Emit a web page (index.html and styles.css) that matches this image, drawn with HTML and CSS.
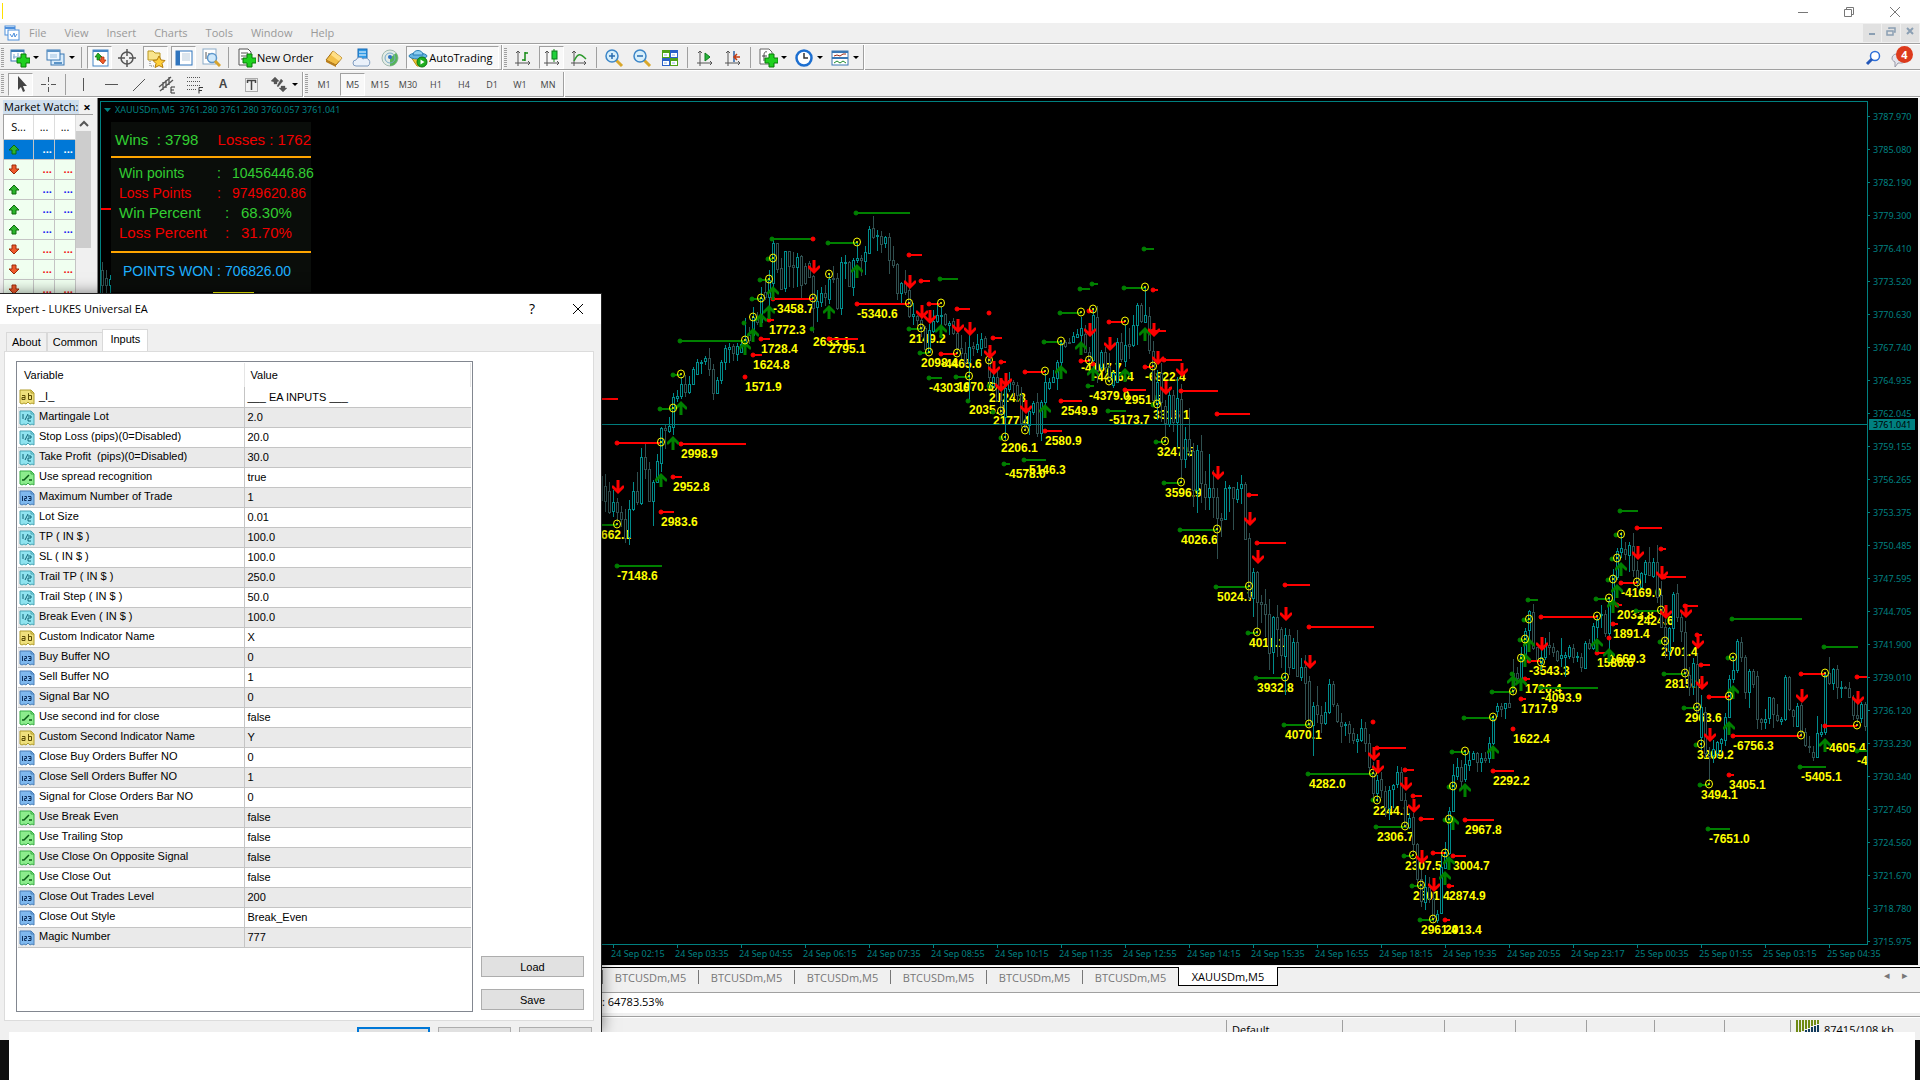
FILE: index.html
```html
<!DOCTYPE html>
<html lang="en">
<head>
    <meta charset="utf-8">
    <meta name="viewport" content="width=device-width, initial-scale=1">
    <title>XAUUSDm,M5</title>
    <link rel="stylesheet" href="styles.css">
</head>
<body>
    <svg class="sprite" aria-hidden="true">
        <symbol id="i-plus" viewBox="0 0 20 20"><path d="M11 6h5v4h4v5h-4v4h-5v-4H7v-5h4z" fill="#1fd01f" stroke="#087a08"/></symbol>
        <symbol id="i-app" viewBox="0 0 16 16"><rect x="1" y="1" width="10" height="9" fill="#fff" stroke="#4d8fdc"/><path d="M1 3h10" stroke="#4d8fdc" stroke-width="2"/><rect x="4" y="5" width="11" height="10" fill="#fff" stroke="#4d8fdc"/><path d="M6 9l2 3 2-4 1 4 2-3" fill="none" stroke="#4d8fdc"/></symbol>
        <symbol id="i-newchart" viewBox="0 0 20 20"><rect x="1" y="2" width="13" height="11" fill="#fff" stroke="#3a78b4"/><path d="M1 3h13" stroke="#3a78b4" stroke-width="2"/><path d="M4 6v5M3 9h8M8 5v3" stroke="#7aa7cf"/><use href="#i-plus" width="20" height="20"/></symbol>
        <symbol id="i-profiles" viewBox="0 0 20 20"><rect x="5" y="6" width="13" height="11" fill="#d9ecfb" stroke="#3a78b4"/><rect x="1" y="2" width="13" height="10" fill="#eef7ff" stroke="#3a78b4"/><path d="M1 3h13M8 15h8" stroke="#5b93c6" stroke-width="2"/><path d="M4 7h7M4 9h7" stroke="#9dc1df"/></symbol>
        <symbol id="i-market" viewBox="0 0 20 20"><rect x="3" y="2" width="15" height="16" fill="#fff" stroke="#4486c6"/><path d="M3 3h15" stroke="#4486c6" stroke-width="2"/><path d="M8 5l4 4h-2v3H7V9H5z" fill="#22b222" stroke="#0b6b0b" stroke-width=".7"/><path d="M13 16l-4-4h2V9h3v3h2z" fill="#f05a28" stroke="#a32b08" stroke-width=".7"/></symbol>
        <symbol id="i-data" viewBox="0 0 20 20"><circle cx="10" cy="10" r="6" fill="none" stroke="#555" stroke-width="1.5"/><path d="M10 1v7M10 12v7M1 10h7M12 10h7" stroke="#555" stroke-width="1.5"/></symbol>
        <symbol id="i-navigator" viewBox="0 0 20 20"><path d="M2 3h5l2 2h5v7H2z" fill="#f9e48c" stroke="#b99620"/><path d="M4 13v5h5" fill="none" stroke="#777" stroke-dasharray="1 1"/><path d="M13 8l2 4 4 .5-3 3 1 4-4-2-4 2 1-4-3-3 4-.5z" fill="#ffcf3a" stroke="#b57d0a"/></symbol>
        <symbol id="i-terminal" viewBox="0 0 20 20"><rect x="2" y="3" width="16" height="14" fill="#fff" stroke="#2f74bd"/><rect x="2" y="3" width="4" height="14" fill="#2f74bd"/><path d="M8 6h8M8 8h8M8 10h8M8 12h8" stroke="#b9cbdb"/></symbol>
        <symbol id="i-tester" viewBox="0 0 20 20"><rect x="2" y="1" width="13" height="15" fill="#fff" stroke="#8cabc8"/><path d="M5 4v7M8 5v5" stroke="#555"/><circle cx="11" cy="10" r="4.5" fill="#cfe8fa" stroke="#5d97cc" stroke-width="1.5"/><path d="M14 13l5 5" stroke="#d8a32c" stroke-width="3"/></symbol>
        <symbol id="i-order" viewBox="0 0 20 20"><path d="M3 1h9l3 3v13H3z" fill="#fff" stroke="#555"/><path d="M5 5h7M5 8h7M5 11h5" stroke="#555"/><use href="#i-plus" width="20" height="20"/></symbol>
        <symbol id="i-book" viewBox="0 0 20 20"><path d="M2 12L9 3l9 7-6 7z" fill="#f2bf48" stroke="#a36d11"/><path d="M2 12l10 5v2L2 14z" fill="#b97e1c"/><path d="M9 3l9 7-3 3-8-6z" fill="#ffdf86"/></symbol>
        <symbol id="i-cloud" viewBox="0 0 20 20"><rect x="6" y="1" width="9" height="12" fill="#2f9ae6" stroke="#1769b3"/><path d="M7 4h7M7 7h7" stroke="#fff"/><path d="M4 18a3 3 0 0 1 0-6 4 4 0 0 1 7-1 3.5 3.5 0 0 1 5 7z" fill="#eaf1fa" stroke="#7f9cc0"/></symbol>
        <symbol id="i-signal" viewBox="0 0 20 20"><circle cx="10" cy="10" r="8" fill="#e3ece6" stroke="#9fb9ae"/><path d="M10 18a8 8 0 0 0 6-13l-6 5z" fill="#56b45a"/><circle cx="10" cy="10" r="5" fill="none" stroke="#79a9c9"/><circle cx="10" cy="9" r="2" fill="#2d73c4"/></symbol>
        <symbol id="i-auto" viewBox="0 0 20 20"><path d="M3 9h14l-5 9H9z" fill="#f3c534" stroke="#b58b13"/><ellipse cx="10" cy="8" rx="9" ry="3" fill="#65b5e3" stroke="#2b7fb4"/><path d="M5 7c0-6 10-6 10 0z" fill="#8fd0f2" stroke="#2b7fb4"/><circle cx="14" cy="14" r="5" fill="#1fae1f" stroke="#0e770e"/><path d="M12.5 11.5v5l4-2.5z" fill="#fff"/></symbol>
        <symbol id="i-axes" viewBox="0 0 20 20"><path d="M5 3v15M2 15h15M3 5l2-2 2 2M15 13l2 2-2 2" fill="none" stroke="#555"/></symbol>
        <symbol id="i-bars" viewBox="0 0 20 20"><use href="#i-axes" width="20" height="20"/><path d="M12 4v9M12 5h3M9 12h3" stroke="#158a15" stroke-width="1.5"/></symbol>
        <symbol id="i-candles" viewBox="0 0 20 20"><use href="#i-axes" width="20" height="20"/><path d="M12 1v13" stroke="#158a15"/><rect x="10" y="3" width="5" height="8" fill="#1fd03a" stroke="#0b7a1a"/></symbol>
        <symbol id="i-line" viewBox="0 0 20 20"><use href="#i-axes" width="20" height="20"/><path d="M5 13c4-8 6-8 12-2" fill="none" stroke="#2c9a2c" stroke-width="1.5"/></symbol>
        <symbol id="i-zoomin" viewBox="0 0 20 20"><path d="M12 12l6 6" stroke="#d9a72b" stroke-width="3"/><circle cx="8" cy="8" r="6" fill="#d7effb" stroke="#3c86c8" stroke-width="1.5"/><path d="M8 5v6M5 8h6" stroke="#2a6db0" stroke-width="1.5"/></symbol>
        <symbol id="i-zoomout" viewBox="0 0 20 20"><path d="M12 12l6 6" stroke="#d9a72b" stroke-width="3"/><circle cx="8" cy="8" r="6" fill="#d7effb" stroke="#3c86c8" stroke-width="1.5"/><path d="M5 8h6" stroke="#2a6db0" stroke-width="1.5"/></symbol>
        <symbol id="i-tile" viewBox="0 0 20 20"><path d="M2 2h8v8H2zM10 10h8v8h-8z" fill="#4ea318"/><path d="M10 2h8v8h-8zM2 10h8v8H2z" fill="#2a62c8"/><path d="M3 5h6v4H3zM11 5h6v4h-6zM3 13h6v4H3zM11 13h6v4h-6z" fill="#fff"/><path d="M4 7h3M12 7h3M4 15h3M12 15h3" stroke="#8cb6e0"/></symbol>
        <symbol id="i-scroll" viewBox="0 0 20 20"><use href="#i-axes" width="20" height="20"/><path d="M10 5v8l5-4z" fill="#27b53c" stroke="#0b7a1a"/></symbol>
        <symbol id="i-shift" viewBox="0 0 20 20"><use href="#i-axes" width="20" height="20"/><path d="M11 3v11" stroke="#2a62a8" stroke-width="1.5"/><path d="M17 9h-5M14 6l-3 3 3 3" fill="none" stroke="#c23b12" stroke-width="1.5"/></symbol>
        <symbol id="i-indicator" viewBox="0 0 20 20"><path d="M2 1h9l3 3v12H2z" fill="#fff" stroke="#666"/><path d="M9 4c-2-1-3 1-3 3v6M4 8h5" fill="none" stroke="#444"/><use href="#i-plus" width="20" height="20"/></symbol>
        <symbol id="i-clock" viewBox="0 0 20 20"><circle cx="10" cy="10" r="7.5" fill="#fff" stroke="#1d6fd0" stroke-width="2.5"/><path d="M10 5v5h4" fill="none" stroke="#333" stroke-width="1.5"/></symbol>
        <symbol id="i-template" viewBox="0 0 20 20"><rect x="2" y="3" width="16" height="14" fill="#fff" stroke="#3a78b4"/><path d="M2 4h16M2 10h16" stroke="#3a78b4" stroke-width="2"/><path d="M4 8l3-1 3 1 3-2h3" fill="none" stroke="#9c2c14"/><path d="M4 15l3-2 3 2 3-2 3 2" fill="none" stroke="#1c8a2c"/></symbol>
        <symbol id="i-cursor" viewBox="0 0 20 20"><path d="M7 2v14l3-3 2 5 2-1-2-5h4z" fill="#444"/></symbol>
        <symbol id="i-cross" viewBox="0 0 20 20"><path d="M10.5 3v5M10.5 13v5M3 10.5h5M13 10.5h5M10 10.5h1" stroke="#555"/></symbol>
        <symbol id="i-vline" viewBox="0 0 20 20"><path d="M10.5 4v13" stroke="#555"/></symbol>
        <symbol id="i-hline" viewBox="0 0 20 20"><path d="M4 10.5h13" stroke="#555"/></symbol>
        <symbol id="i-trend" viewBox="0 0 20 20"><path d="M4 17L16 5" stroke="#555"/></symbol>
        <symbol id="i-channel" viewBox="0 0 20 20"><path d="M2 13L14 3M3 17L16 6M6 8v8M9 6v8M12 3v8" stroke="#555" stroke-width="1.3"/><path d="M18 13h-4v6h4M14 16h3" fill="none" stroke="#333"/></symbol>
        <symbol id="i-fibo" viewBox="0 0 20 20"><path d="M2 3.5h14M2 7.5h14M2 11.5h14M2 15.5h9" stroke="#555" stroke-dasharray="1 1"/><path d="M18 13.5h-4v6M14 16.5h3" fill="none" stroke="#333"/></symbol>
        <symbol id="i-label" viewBox="0 0 20 20"><rect x="4.5" y="4.5" width="12" height="13" fill="none" stroke="#666" stroke-dasharray="1 1"/><path d="M6 6.5h9M10.5 6v10M6.5 6v3M14.5 6v3" stroke="#444" stroke-width="1.5"/></symbol>
        <symbol id="i-shapes" viewBox="0 0 20 20"><path d="M6 3l4 4-2 1v2H5V8L2 7zM14 18l-4-4h2v-2h4v2h2zM12 5l2 2-5 6-1-1z" fill="#555" stroke="#555" stroke-width=".3"/></symbol>
        <symbol id="i-search" viewBox="0 0 16 16"><circle cx="10" cy="6" r="4.5" fill="#fff" stroke="#2e6fd8" stroke-width="1.5"/><path d="M7 9l-5 5" stroke="#2457b8" stroke-width="3"/></symbol>
        <symbol id="i-up" viewBox="0 0 12 12"><path d="M6 1l5 5H8v4H4V6H1z" fill="#2cb52c" stroke="#0d6b0d"/></symbol>
        <symbol id="i-down" viewBox="0 0 12 12"><path d="M6 10L1 5h3V1h4v4h3z" fill="#ee5a2a" stroke="#9c2c0a"/></symbol>
        <symbol id="i-page" viewBox="0 0 16 16"><path d="M1 1h11l3 3v11l-2-1-2 1-2-2-2 2-2-1-2 1-2-1z"/><path d="M12 1v3h3" fill="none"/></symbol>
        <symbol id="i-double" viewBox="0 0 16 16"><use href="#i-page" fill="#8fe3ef" stroke="#4aa5b5" width="16" height="16"/><path d="M4 4v5M6 10l3-6M9 6h3v2H9v3h3" fill="none" stroke="#0f6273"/></symbol>
        <symbol id="i-bool" viewBox="0 0 16 16"><use href="#i-page" fill="#8cec8c" stroke="#37ab45" width="16" height="16"/><path d="M3 10h2l5-5M10 10h3" fill="none" stroke="#0b5c17" stroke-width="1.5"/></symbol>
        <symbol id="i-int" viewBox="0 0 16 16"><use href="#i-page" fill="#7fb8ee" stroke="#4a7fb8" width="16" height="16"/><path d="M3.5 6v5M5.5 6.5h2v2h-2v2h2M9 6.5h3v4H9M10 8.5h2" fill="none" stroke="#0d2f5c"/></symbol>
        <symbol id="i-string" viewBox="0 0 16 16"><use href="#i-page" fill="#efe07c" stroke="#b09c2c" width="16" height="16"/><path d="M3 6.5h3v4H3v-2h3M9.5 4v6.5h3v-4h-3" fill="none" stroke="#5c4d06"/></symbol>
    </svg>

    <div class="app">
        <header class="titlebar">
            <span class="title-mark"></span>
            <div class="window-controls">
                <button aria-label="Minimize"><svg viewBox="0 0 12 12"><path d="M1 6.5h10"/></svg></button>
                <button aria-label="Restore"><svg viewBox="0 0 12 12"><path d="M1.5 3.5h7v7h-7zM3.5 3.5v-2h7v7h-2"/></svg></button>
                <button aria-label="Close"><svg viewBox="0 0 12 12"><path d="M1 1l10 10M11 1L1 11"/></svg></button>
            </div>
        </header>

        <nav class="menubar">
            <svg class="icon-sm"><use href="#i-app"/></svg>
            <button>File</button><button>View</button><button>Insert</button><button>Charts</button><button>Tools</button><button>Window</button><button>Help</button>
            <div class="mdi-controls">
                <button aria-label="Minimize chart"><svg viewBox="0 0 12 12"><path d="M3 9h6"/></svg></button>
                <button aria-label="Restore chart"><svg viewBox="0 0 12 12"><path d="M2 6h6v4H2zM4 4V3h6v4H9" stroke-width="1.5"/></svg></button>
                <button aria-label="Close chart"><svg viewBox="0 0 12 12"><path d="M3 3l6 6M9 3L3 9"/></svg></button>
            </div>
        </nav>

        <div class="toolbar">
            <i class="grip"></i>
            <button class="drop" aria-label="New chart"><svg><use href="#i-newchart"/></svg></button>
            <button class="drop" aria-label="Profiles"><svg><use href="#i-profiles"/></svg></button>
            <i class="sep"></i>
            <button class="on" aria-label="Market Watch"><svg><use href="#i-market"/></svg></button>
            <button aria-label="Data Window"><svg><use href="#i-data"/></svg></button>
            <button class="on" aria-label="Navigator"><svg><use href="#i-navigator"/></svg></button>
            <button class="on" aria-label="Terminal"><svg><use href="#i-terminal"/></svg></button>
            <button aria-label="Strategy Tester"><svg><use href="#i-tester"/></svg></button>
            <i class="sep"></i>
            <button class="wide"><svg><use href="#i-order"/></svg>New Order</button>
            <button aria-label="MetaEditor"><svg><use href="#i-book"/></svg></button>
            <button aria-label="Storage"><svg><use href="#i-cloud"/></svg></button>
            <button aria-label="Signals"><svg><use href="#i-signal"/></svg></button>
            <button class="wide on"><svg><use href="#i-auto"/></svg>AutoTrading</button>
            <i class="edge"></i>
            <i class="grip"></i>
            <button aria-label="Bar Chart"><svg><use href="#i-bars"/></svg></button>
            <button class="on" aria-label="Candlesticks"><svg><use href="#i-candles"/></svg></button>
            <button aria-label="Line Chart"><svg><use href="#i-line"/></svg></button>
            <i class="sep"></i>
            <button aria-label="Zoom In"><svg><use href="#i-zoomin"/></svg></button>
            <button aria-label="Zoom Out"><svg><use href="#i-zoomout"/></svg></button>
            <button aria-label="Tile Windows"><svg><use href="#i-tile"/></svg></button>
            <i class="sep"></i>
            <button aria-label="Auto Scroll"><svg><use href="#i-scroll"/></svg></button>
            <button aria-label="Chart Shift"><svg><use href="#i-shift"/></svg></button>
            <i class="sep"></i>
            <button class="drop" aria-label="Indicators"><svg><use href="#i-indicator"/></svg></button>
            <button class="drop" aria-label="Periods"><svg><use href="#i-clock"/></svg></button>
            <button class="drop" aria-label="Templates"><svg><use href="#i-template"/></svg></button>
            <i class="edge"></i>
            <div class="toolbar-right">
                <button aria-label="Search"><svg class="icon-sm"><use href="#i-search"/></svg></button>
                <button class="chat" aria-label="Messages"><svg viewBox="0 0 20 20"><path d="M1 10c0-6 14-6 14 0s-5 5-8 5l-3 4v-5c-2-1-3-2-3-4z" fill="#e4e4ec" stroke="#9a9aa8"/></svg><span class="badge">4</span></button>
            </div>
        </div>

        <div class="toolbar toolbar-lines">
            <i class="grip"></i>
            <button class="on" aria-label="Cursor"><svg><use href="#i-cursor"/></svg></button>
            <button aria-label="Crosshair"><svg><use href="#i-cross"/></svg></button>
            <i class="sep"></i>
            <button aria-label="Vertical Line"><svg><use href="#i-vline"/></svg></button>
            <button aria-label="Horizontal Line"><svg><use href="#i-hline"/></svg></button>
            <button aria-label="Trendline"><svg><use href="#i-trend"/></svg></button>
            <button aria-label="Equidistant Channel"><svg><use href="#i-channel"/></svg></button>
            <button aria-label="Fibonacci Retracement"><svg><use href="#i-fibo"/></svg></button>
            <button class="letter">A</button>
            <button aria-label="Text Label"><svg><use href="#i-label"/></svg></button>
            <button class="drop" aria-label="Arrows"><svg><use href="#i-shapes"/></svg></button>
            <i class="edge"></i>
            <i class="grip"></i>
            <button>M1</button><button class="on">M5</button><button>M15</button><button>M30</button><button>H1</button><button>H4</button><button>D1</button><button>W1</button><button>MN</button>
            <i class="edge"></i>
        </div>

        <main class="workspace">
            <aside class="market">
                <div class="market-title"><span>Market Watch:</span><button aria-label="Close Market Watch">×</button></div>
                <div class="market-body">
                    <table>
                        <thead><tr><th>S...</th><th>...</th><th>...</th></tr></thead>
                        <tbody>
                            <tr class="up selected"><td><svg><use href="#i-up"/></svg></td><td>...</td><td>...</td></tr>
                            <tr class="down"><td><svg><use href="#i-down"/></svg></td><td>...</td><td>...</td></tr>
                            <tr class="up"><td><svg><use href="#i-up"/></svg></td><td>...</td><td>...</td></tr>
                            <tr class="up"><td><svg><use href="#i-up"/></svg></td><td>...</td><td>...</td></tr>
                            <tr class="up"><td><svg><use href="#i-up"/></svg></td><td>...</td><td>...</td></tr>
                            <tr class="down"><td><svg><use href="#i-down"/></svg></td><td>...</td><td>...</td></tr>
                            <tr class="down"><td><svg><use href="#i-down"/></svg></td><td>...</td><td>...</td></tr>
                            <tr class="down"><td><svg><use href="#i-down"/></svg></td><td>...</td><td>...</td></tr>
                        </tbody>
                    </table>
                    <div class="scrollbar"><svg viewBox="0 0 10 10"><path d="M1 7l4-4 4 4" fill="none" stroke="#555" stroke-width="2"/></svg><i></i></div>
                </div>
            </aside>

            <section class="chart">
                <svg id="plot"></svg>
                <div class="stats">
                    <div class="stats-head"><span class="win">Wins &nbsp;: 3798</span><span class="loss">Losses : 1762</span></div>
                    <dl class="stats-body">
                        <div class="win"><dt>Win points</dt><dd>:</dd><dd>10456446.86</dd></div>
                        <div class="loss"><dt>Loss Points</dt><dd>:</dd><dd>9749620.86</dd></div>
                        <div class="win big"><dt>Win Percent</dt><dd>:</dd><dd>68.30%</dd></div>
                        <div class="loss big"><dt>Loss Percent</dt><dd>:</dd><dd>31.70%</dd></div>
                    </dl>
                    <div class="stats-foot">POINTS WON : 706826.00</div>
                </div>
            </section>
        </main>

        <nav class="chart-tabs">
            <button>BTCUSDm,M5</button><button>BTCUSDm,M5</button><button>BTCUSDm,M5</button><button>BTCUSDm,M5</button><button>BTCUSDm,M5</button><button>BTCUSDm,M5</button><button class="active">XAUUSDm,M5</button>
            <div class="tab-arrows"><button aria-label="Previous tab">◂</button><button aria-label="Next tab">▸</button></div>
        </nav>
        <div class="terminal"><span>: 64783.53%</span></div>
        <footer class="statusbar">
            <span></span><span>Default</span><span></span><span></span><span></span><span></span><span></span><span></span>
            <span class="traffic"><svg viewBox="0 0 24 14"><path d="M1 0v14M4 0v12M7 0v11M10 0v9M13 0v8M16 0v6M19 0v5M22 0v4" stroke="#6f8a14" stroke-width="2"/><path d="M7 12v2M10 10v4M13 9v5M16 7v7M19 6v8M22 5v9" stroke="#123a5c" stroke-width="2"/></svg>87415/108 kb</span>
        </footer>

        <section class="dialog" role="dialog" aria-labelledby="dialog-title">
            <header>
                <h1 id="dialog-title">Expert - LUKES Universal EA</h1>
                <button class="help" aria-label="Help for dialog">?</button>
                <button aria-label="Close dialog"><svg viewBox="0 0 12 12"><path d="M1 1l10 10M11 1L1 11"/></svg></button>
            </header>
            <div class="dialog-tabs"><button>About</button><button>Common</button><button class="active">Inputs</button></div>
            <div class="panel">
                <div class="listbox">
                    <table>
                        <thead><tr><th>Variable</th><th>Value</th></tr></thead>
                        <tbody id="params"></tbody>
                    </table>
                </div>
                <div class="side"><button>Load</button><button>Save</button></div>
            </div>
            <div class="actions"><button class="default" aria-label="OK"></button><button aria-label="Cancel"></button><button aria-label="Reset"></button></div>
        </section>
    </div>
    <div class="desk"><i></i><i></i></div>

    <script src="chart.js"></script>
</body>
</html>
```

FILE: styles.css
```css
* {
    box-sizing: border-box;
}
html, body {
    margin: 0;
    padding: 0;
}
body {
    display: flex;
    flex-direction: column;
    height: 100vh;
    background: #fff;
    font-family: "Open Sans", "Noto Sans", sans-serif;
    font-size: 11px;
    color: #000;
    overflow: hidden;
}
button {
    margin: 0;
    padding: 0;
    border: none;
    background: none;
    font: inherit;
    color: inherit;
}
.sprite {
    position: absolute;
    width: 0;
    height: 0;
}
.app {
    position: relative;
    display: flex;
    flex-direction: column;
    flex: 1;
    min-height: 0;
    overflow: hidden;
    background: #f0f0f0;
}
.icon-sm {
    width: 16px;
    height: 16px;
}

/* title and menu */
.titlebar {
    display: flex;
    justify-content: space-between;
    height: 23px;
    background: #fff;
}
.title-mark {
    width: 1px;
    height: 16px;
    margin: 3px 0 0 2px;
    background: #ffe000;
}
.window-controls {
    display: flex;
    padding-right: 2px;
}
.window-controls button {
    width: 46px;
    height: 20px;
}
.window-controls svg, .dialog header svg {
    width: 12px;
    height: 12px;
    fill: none;
    stroke: #777;
    vertical-align: middle;
}
.menubar {
    display: flex;
    align-items: center;
    height: 22px;
    padding: 0 1px 2px 4px;
    border-bottom: 1px solid #fff;
    box-shadow: inset 0 -1px #a0a0a0;
    color: #999;
}
.menubar > button {
    padding: 0 9px;
}
.mdi-controls {
    display: flex;
    gap: 1px;
    margin-left: auto;
}
.mdi-controls button {
    width: 18px;
    height: 18px;
    background: #e1e1e1;
}
.mdi-controls svg {
    width: 12px;
    height: 12px;
    fill: none;
    stroke: #8b9fb3;
    stroke-width: 2px;
}

/* toolbars */
.toolbar {
    display: flex;
    align-items: center;
    height: 26px;
    border-bottom: 1px solid #fff;
    box-shadow: inset 0 -1px #a0a0a0;
}
.toolbar button {
    display: flex;
    align-items: center;
    justify-content: center;
    width: 28px;
    height: 23px;
}
.toolbar button svg {
    width: 20px;
    height: 20px;
    flex: none;
}
.toolbar button svg.icon-sm {
    width: 16px;
    height: 16px;
}
.toolbar .on {
    border: 1px solid #fff;
    border-top-color: #a0a0a0;
    border-left-color: #a0a0a0;
    background: #f8f8f8;
    width: 25px;
    margin: 0 1px 0 2px;
}
.toolbar .wide {
    width: auto;
    padding: 0 7px 0 4px;
    gap: 1px;
}
.toolbar .wide.on {
    width: auto;
    padding: 0 6px 0 1px;
}
.toolbar .drop {
    width: 36px;
    gap: 3px;
}
.drop::after {
    content: "";
    border: 3px solid transparent;
    border-top-color: #000;
    border-bottom: 0;
}
.grip {
    width: 3px;
    height: 20px;
    margin: 0 2px 0 1px;
    background: repeating-linear-gradient(#a0a0a0 0 1px, #f0f0f0 1px 2px);
}
.sep {
    width: 1px;
    height: 21px;
    margin: 0 3px;
    background: #a0a0a0;
}
.edge {
    width: 2px;
    height: 25px;
    margin-left: 1px;
    border-left: 1px solid #a0a0a0;
    background: #fff;
}
.toolbar-right {
    display: flex;
    margin-left: auto;
    padding-right: 5px;
}
.chat {
    position: relative;
}
.badge {
    position: absolute;
    top: 0;
    right: 2px;
    width: 17px;
    height: 17px;
    border-radius: 50%;
    background: #dd3a1c;
    color: #fff;
    font: bold 11px/17px "Open Sans", sans-serif;
    text-align: center;
}
.toolbar-lines {
    height: 27px;
    font-size: 9px;
    color: #444;
}
.toolbar .letter {
    font: bold 12px "Liberation Sans", sans-serif;
}

/* market watch */
.workspace {
    display: flex;
    flex: 1;
    min-height: 0;
}
.market {
    width: 97px;
    padding: 2px 4px 0 3px;
}
.market-title {
    display: flex;
    justify-content: space-between;
    height: 14px;
    line-height: 13px;
}
.market-title span {
    background: #cfdfee;
    padding: 0 1px;
}
.market-title button {
    width: 12px;
    font-weight: bold;
    font-size: 13px;
    line-height: 12px;
}
.market-body {
    display: flex;
    border-top: 1px solid #a0a0a0;
}
.market table {
    width: 73px;
    table-layout: fixed;
    border-collapse: collapse;
    background: #f0fff0;
    border-left: 1px solid #a0a0a0;
}
.market th {
    height: 24px;
    padding: 0;
    background: #fff;
    border-right: 1px solid #ddd;
    font-weight: normal;
}
.market th:first-child, .market td:first-child {
    width: 30px;
}
.market td {
    height: 20px;
    padding: 0 2px;
    border: 1px solid #c4c4c4;
    text-align: right;
    line-height: 12px;
    font-weight: bold;
}
.market td:first-child {
    text-align: left;
    padding-left: 4px;
}
.market svg {
    width: 12px;
    height: 12px;
    vertical-align: middle;
}
.market .up td {
    color: #1818f0;
}
.market .down td {
    color: #f01010;
}
.market .selected td {
    background: #0078d7;
    color: #fff;
}
.scrollbar {
    width: 15px;
    text-align: center;
}
.scrollbar svg {
    width: 10px;
    height: 10px;
    margin: 2px 0;
}
.scrollbar i {
    display: block;
    height: 117px;
    background: #cdcdcd;
}

/* chart */
.chart {
    position: relative;
    flex: 1;
    min-width: 0;
    margin-right: 2px;
    border-left: 1px solid #808080;
    background: #000;
    overflow: hidden;
}
#plot {
    display: block;
    width: 100%;
    height: 100%;
    font-family: "Noto Sans", sans-serif;
    font-size: 9px;
}
.axis {
    fill: none;
    stroke: #008080;
    shape-rendering: crispEdges;
}
.axis-text {
    fill: #008080;
    white-space: pre;
}
.bull, .bear {
    fill: #000;
    shape-rendering: crispEdges;
}
.bull {
    stroke: #008b8b;
}
.bear {
    stroke: #2f4f4f;
}
.profit {
    fill: #ff0;
    font: bold 12px "Liberation Sans", sans-serif;
}
.ring {
    fill: none;
    stroke: #ff0;
}
.sell {
    fill: red;
    stroke: red;
}
.buy {
    fill: #008000;
    stroke: #008000;
}
.level {
    stroke-width: 2px;
}
.arrow {
    stroke: none;
}
.stats {
    position: absolute;
    left: 13px;
    top: 24px;
    width: 200px;
    height: 170px;
    background: #0a0d0a;
    font-family: "Liberation Sans", sans-serif;
    font-size: 14px;
    line-height: 20px;
    white-space: nowrap;
}
.stats .win {
    color: #32cd32;
}
.stats .loss {
    color: #f00000;
}
.stats-head {
    display: flex;
    justify-content: space-between;
    height: 36px;
    padding: 8px 0 0 4px;
    border-bottom: 2px solid orange;
    font-size: 15px;
}
.stats-body {
    height: 95px;
    margin: 0;
    padding: 5px 0 0 8px;
    border-bottom: 2px solid orange;
}
.stats-body div {
    display: grid;
    grid-template-columns: 98px 15px auto;
    justify-content: start;
}
.stats-body .big {
    grid-template-columns: 106px 16px auto;
    font-size: 15px;
}
.stats-body dd {
    margin: 0;
}
.stats-foot {
    padding: 8px 0 0 12px;
    color: #1eb0ff;
}

/* bottom strips */
.chart-tabs {
    display: flex;
    height: 26px;
    margin-top: 1px;
    padding-left: 602px;
    border-top: 1px solid #fff;
    box-shadow: inset 0 1px #000;
    color: #777;
}
.chart-tabs > button {
    width: 96px;
    height: 14px;
    margin-top: 3px;
    line-height: 13px;
    border-left: 1px solid #777;
}
.chart-tabs > .active {
    width: 100px;
    height: 19px;
    margin: 0;
    border: 1px solid #000;
    border-top: none;
    background: #fff;
    color: #000;
}
.tab-arrows {
    margin: 0 6px 0 auto;
}
.tab-arrows button {
    width: 18px;
}
.terminal {
    height: 24px;
    padding: 0 3px 3px 602px;
    border-top: 1px solid #a0a0a0;
    background: #fff;
    border-bottom: 3px solid #f0f0f0;
    line-height: 18px;
}
.statusbar {
    display: grid;
    grid-template-columns: 1226fr 116fr 102fr 71fr 71fr 68fr 70fr 66fr 130fr;
    height: 16px;
    border-top: 1px solid #a0a0a0;
    box-shadow: inset 0 1px #fff;
    line-height: 20px;
    overflow: hidden;
}
.statusbar span {
    margin-top: 3px;
    padding-left: 5px;
    border-left: 1px solid #a0a0a0;
}
.traffic svg {
    width: 24px;
    height: 14px;
    margin-right: 4px;
    vertical-align: top;
}
.desk {
    display: flex;
    justify-content: space-between;
    height: 48px;
}
.desk i {
    width: 9px;
    border-top: 8px solid #f0f0f0;
    background: #0f0f0f;
}
.desk i:last-child {
    width: 5px;
}

/* expert properties dialog */
.dialog {
    position: absolute;
    left: 0;
    top: 293px;
    bottom: 0;
    width: 602px;
    display: flex;
    flex-direction: column;
    overflow: hidden;
    background: #f0f0f0;
    border-top: 1px solid #222;
    border-right: 1px solid #222;
    box-shadow: 0 0 14px rgba(0, 0, 0, .5);
    font-family: "Liberation Sans", sans-serif;
    font-size: 11px;
}
.dialog header {
    display: flex;
    align-items: center;
    height: 30px;
    padding: 0 0 2px 6px;
    background: #fff;
}
.dialog h1 {
    margin: 0 auto 0 0;
    font: normal 11px "Open Sans", sans-serif;
}
.dialog header button {
    width: 46px;
}
.dialog header svg {
    stroke: #000;
}
.dialog header .help {
    font: 14px "Open Sans", sans-serif;
}
.dialog-tabs {
    display: flex;
    align-items: flex-end;
    height: 27px;
    padding-left: 6px;
}
.dialog-tabs button {
    height: 19px;
    padding: 0 5px;
    border: 1px solid #d9d9d9;
    border-bottom: none;
}
.dialog-tabs .active {
    height: 22px;
    padding: 0 7px 4px;
    margin-left: -1px;
    background: #fff;
}
.panel {
    display: flex;
    flex: 1;
    gap: 8px;
    min-height: 0;
    margin: 0 7px 0 4px;
    padding: 9px 9px 8px 11px;
    background: #fff;
    border: 1px solid #dcdcdc;
}
.listbox {
    flex: 1;
    padding: 1px;
    border: 1px solid #828790;
    overflow: hidden;
}
.listbox table {
    width: 100%;
    table-layout: fixed;
    border-collapse: collapse;
}
.listbox th {
    height: 24px;
    padding: 0 6px;
    border-right: 1px solid #e5e5e5;
    font-weight: normal;
    text-align: left;
}
.listbox th:first-child {
    width: 226px;
}
.listbox td {
    height: 20px;
    padding: 0 3px;
    border-bottom: 1px solid #c4c4c4;
    white-space: pre;
    line-height: 16px;
}
.listbox td:first-child {
    padding: 0 1px;
    border-right: 1px solid #c4c4c4;
}
.listbox tr:nth-child(even) td {
    background: #eaeaea;
}
.listbox svg {
    width: 16px;
    height: 16px;
    margin-right: 4px;
    vertical-align: middle;
}
.side {
    display: flex;
    flex-direction: column;
    justify-content: flex-end;
    gap: 12px;
    width: 103px;
    padding-bottom: 2px;
}
.side button, .actions button {
    height: 21px;
    border: 1px solid #adadad;
    background: #e1e1e1;
}
.actions {
    display: flex;
    justify-content: flex-end;
    gap: 8px;
    height: 11px;
    padding: 6px 9px 0 0;
}
.actions button {
    width: 73px;
    flex: none;
}
.actions .default {
    border: 2px solid #0078d7;
}
```

FILE: chart.js
```js
(() => {
    const plot = document.getElementById("plot");
    const out = [];
    // Plot coordinates are window coordinates, shifted by the plot's own corner
    const left = 98, top = 98, right = 1867, bottom = 944, priceY = 424;

    // One entry per bar, 4px apart: direction, high, body top, body bottom, low
    const bars = `d470 476 500 503,d474 486 501 512,d482 491 512 514,u490 502 511 517,d498 502 512 522,d506 512 519 527,d509 519 538 543,u500 509 537 545,u482 491 509 511,d472 491 502 505,
u448 457 503 505,d444 457 469 479,d462 469 501 502,u480 482 501 526,u454 461 482 483,u427 428 463 472,d425 428 430 449,u417 426 431 433,u393 397 427 435,u390 396 398 402,
u377 384 396 399,d375 384 392 397,u376 384 392 394,u367 369 384 385,u359 362 374 375,u360 362 363 374,u356 358 361 365,d348 358 369 376,d364 369 393 400,u377 380 393 394,
u360 362 380 384,u345 348 362 370,u343 347 349 363,d344 346 353 361,u343 346 354 361,u342 344 352 353,u318 339 345 347,d327 335 340 344,u307 317 335 337,d312 317 322 325,
u287 298 322 323,d280 292 297 300,u270 280 297 310,u240 243 283 290,d243 243 269 273,d258 268 289 290,u251 251 288 292,d251 251 266 287,d252 265 267 288,u253 257 267 287,
d255 256 285 298,d263 266 283 285,d261 263 277 278,d275 276 308 333,u290 301 307 322,u287 293 302 307,d285 293 297 306,u273 279 299 304,d266 278 279 283,d273 278 308 310,
u257 262 308 315,u255 262 263 279,d261 262 286 287,u258 260 287 296,u243 258 260 263,d255 258 260 276,u246 252 261 275,u226 229 253 254,d216 228 237 239,u230 235 236 251,
d231 236 244 253,u236 237 243 248,d233 237 260 274,d246 260 265 268,d263 264 293 300,u282 283 293 303,d270 282 292 295,d288 290 316 318,u303 314 316 325,d315 316 320 326,
d317 320 328 337,d326 328 349 352,u324 330 352 353,u310 321 331 333,u303 315 321 323,u307 315 316 332,d313 314 324 326,u321 323 325 335,d318 321 333 335,d330 333 348 353,
d335 348 353 359,d342 353 362 367,u335 347 362 400,d342 346 348 356,u334 344 349 353,u333 339 348 356,d336 338 347 348,d347 349 377 387,u372 377 387 388,d370 377 400 402,
d387 400 413 417,u380 388 417 440,u372 380 389 392,d380 382 384 397,d382 385 395 402,d387 395 423 427,d415 424 427 430,u410 411 425 435,u401 403 412 415,d393 402 433 437,
u400 402 433 441,u373 382 402 405,u378 382 388 390,u370 377 382 383,u360 362 378 390,u342 343 362 368,d340 342 346 348,d338 342 343 343,u332 336 342 343,u329 334 337 338,
u317 328 335 347,d325 334 352 353,d347 352 360 363,u308 315 360 373,d306 317 370 383,u350 352 367 370,d347 352 367 373,d353 367 380 383,u372 373 385 388,u338 342 382 383,
d333 342 359 362,u325 345 361 367,d328 344 346 359,u315 325 345 347,u303 305 325 345,d303 305 321 323,u288 315 322 323,d307 316 350 354,d341 351 400 402,u370 382 404 420,
d363 373 402 422,d400 406 423 442,u387 395 424 427,d390 395 422 432,u377 398 422 447,d384 399 459 483,u427 439 459 468,d408 439 451 457,d443 451 490 507,u445 450 490 513,
d435 451 483 503,d471 484 497 510,u454 488 497 510,d470 488 497 518,d488 497 518 559,d513 518 520 537,u481 488 519 520,u485 487 488 512,d487 487 498 530,u482 489 499 503,
u475 484 488 504,d482 484 539 540,d533 538 597 600,u568 572 598 617,d571 572 602 635,d595 602 604 623,d589 604 614 637,d599 614 653 670,u616 617 652 674,d605 617 629 657,
d627 629 655 668,u628 635 656 695,d629 635 667 675,u638 642 668 669,d630 642 676 677,u658 667 677 681,d655 667 683 720,d676 681 725 727,u702 706 725 756,d686 705 714 723,
d706 715 723 733,u702 712 723 725,u679 684 712 714,d681 684 704 707,d703 705 721 723,d713 722 726 743,u722 724 725 736,d721 724 733 743,d728 733 740 744,u734 739 741 753,
u719 728 740 742,d722 728 743 752,d734 743 767 773,d762 773 793 802,u775 780 793 802,d772 779 790 798,d786 791 807 817,u786 790 808 820,u784 785 789 808,u766 772 784 788,
d767 772 800 801,d793 800 827 828,u813 818 827 829,d813 817 844 853,d843 844 879 883,d870 879 901 907,u875 887 902 910,d877 887 898 903,d892 899 918 923,u910 914 920 923,
u855 867 913 914,u842 852 868 869,u807 811 853 855,u764 775 811 812,u758 767 776 780,d760 767 781 789,u752 764 779 782,u751 760 765 771,u751 753 759 760,d752 753 762 772,
u753 758 762 772,d752 758 760 763,u737 743 758 763,u715 719 743 745,u703 706 711 717,d703 706 709 717,u703 703 708 719,d693 703 707 708,d659 673 690 695,d667 673 678 680,
u647 655 678 683,u628 631 657 658,u610 611 630 647,d604 612 648 650,d647 647 661 663,u647 657 663 670,u638 645 657 660,d632 645 647 655,d643 647 652 657,d650 651 660 662,
u638 655 658 667,u652 655 657 677,u645 647 656 659,d644 648 657 663,u652 656 657 662,d653 657 667 672,u641 643 668 668,d639 643 648 650,u623 626 648 650,u617 620 627 638,
u605 614 615 628,d610 614 633 637,u598 601 633 653,u569 575 600 602,u548 551 577 580,u532 548 552 558,d542 549 554 560,u542 545 555 572,d533 546 570 577,d561 570 583 588,
u572 573 587 588,u560 562 574 583,d547 562 575 576,u558 562 576 578,d545 562 597 603,d581 595 627 627,d619 627 647 658,u627 628 651 660,u592 594 628 642,d584 593 617 622,
d612 617 631 642,d621 632 673 683,d667 675 687 696,u658 663 686 695,d653 664 712 713,u695 707 737 750,d707 712 753 758,d747 754 756 783,u740 749 755 763,u741 742 753 758,
u738 739 743 753,u713 717 740 746,u675 679 717 718,u657 670 679 683,u639 641 670 673,d637 642 657 662,d655 657 692 699,u669 671 692 708,d669 671 684 688,d671 676 719 729,
d718 719 722 730,u709 719 722 729,u697 697 718 724,d697 698 714 728,d704 715 720 722,u717 719 721 725,u675 677 719 721,d676 677 709 711,d709 710 716 727,u703 706 726 727,
d703 705 732 737,d728 732 745 747,d736 746 747 753,d746 752 757 761,u716 733 757 758,u724 732 734 737,u673 675 732 735,d657 673 683 685,u668 669 683 690,d665 669 687 699,
u681 687 688 698,d686 687 687 689,d682 688 697 698,d695 698 715 720,d703 715 718 723,u702 704 718 723,d702 704 726 731`;

    // Trade levels: start x, end x, y
    const buyLevels = `590 617 525,617 662 566,660 673 409,673 681 375,680 745 341,744 744 323,752 761 299,760 769 280,768 773 259,772 813 239,828 857 243,856 910 213,812 812 329,
940 958 279,909 921 329,920 929 353,929 942 378,956 969 377,968 968 401,989 989 386,993 993 412,1001 1001 438,1004 1010 464,1024 1046 460,1044 1061 342,1060 1081 313,1080 1090 289,1092 1098 284,
1088 1094 386,1108 1126 411,1124 1145 288,1144 1154 249,1153 1153 405,1156 1165 442,1164 1181 483,1180 1217 530,1216 1249 587,1248 1257 633,1256 1285 678,1284 1309 725,1308 1373 774,1373 1373 800,
1376 1405 827,1404 1413 856,1412 1421 886,1420 1433 920,1528 1538 600,1524 1529 620,1520 1525 640,1492 1513 692,1464 1493 718,1452 1465 752,1449 1449 787,1445 1445 820,1512 1512 674,1540 1598 688,
1596 1609 599,1608 1608 580,1612 1612 559,1616 1616 535,1620 1638 511,1636 1661 611,1660 1660 642,1664 1685 674,1684 1697 708,1696 1696 745,1700 1709 785,1708 1730 829,1728 1733 658,1732 1802 619,
1824 1858 647,1800 1826 767,1857 1867 751`;
    const sellLevels = `585 618 399,617 660 443,681 746 444,673 682 477,661 674 512,813 813 239,773 813 299,769 774 320,761 770 339,753 762 355,745 745 377,829 858 339,857 909 304,
909 922 255,921 930 281,929 940 304,957 970 309,989 989 313,993 1002 338,1001 1006 362,941 957 354,1025 1045 372,1089 1093 311,1081 1089 361,1093 1093 364,1109 1125 322,1153 1158 290,1153 1166 331,
1164 1182 360,1145 1153 367,1125 1146 390,1061 1082 401,1045 1062 431,1181 1218 391,1217 1250 414,1249 1258 495,1257 1286 543,1285 1310 585,1309 1374 627,1373 1373 722,1377 1406 748,1405 1414 770,
1413 1422 796,1421 1434 819,1445 1450 920,1449 1454 886,1453 1466 856,1433 1445 853,1465 1494 820,1493 1514 771,1513 1513 729,1521 1526 699,1525 1530 679,1529 1540 661,1541 1597 617,
1597 1607 653,1609 1609 638,1613 1618 624,1617 1622 605,1621 1637 583,1637 1662 528,1661 1666 549,1664 1686 577,1685 1698 606,1697 1702 635,1701 1710 665,1709 1729 697,1729 1734 775,1733 1801 736,
1801 1825 674,1825 1857 726,1857 1867 677`;

    const rings = `617 524,661 442,673 408,681 374,745 340,753 317,761 298,769 279,773 258,813 298,829 274,857 242,909 303,921 328,941 303,929 352,957 353,969 376,989 360,993 387,1001 411,1005 437,
1025 430,1045 371,1061 341,1081 312,1093 309,1089 360,1109 381,1125 321,1145 287,1153 366,1157 404,1165 441,1181 482,1217 529,1249 586,1257 632,1285 677,1309 724,1373 773,1377 800,1405 826,1413 855,
1421 885,1433 919,1445 853,1449 819,1453 786,1465 751,1493 717,1513 691,1521 658,1525 639,1529 619,1541 662,1597 616,1609 598,1613 579,1617 558,1621 534,1637 582,1661 610,1665 641,1685 673,1697 707,
1701 744,1709 784,1729 696,1733 657,1801 735,1825 673,1857 725`;
    const upArrows = `661 480,673 443,681 408,745 348,753 335,761 320,769 312,773 293,829 312,857 271,941 331,1045 411,1061 372,1081 348,1093 374,1125 375,1145 334,1445 878,1449 863,1453 823,1465 790,
1493 752,1513 682,1521 684,1525 660,1529 645,1597 645,1609 655,1613 606,1617 591,1621 569,1729 728,1733 692,1825 745`;
    const downArrows = `618 487,814 267,910 282,922 312,930 317,958 326,970 329,990 352,994 368,1001 385,1006 380,1026 407,1090 330,1110 344,1154 330,1158 358,1166 388,1182 370,1218 473,1250 519,1258 557,
1286 614,1310 662,1374 754,1378 767,1406 784,1414 806,1422 857,1434 885,1542 644,1638 553,1662 573,1666 612,1686 611,1698 642,1702 683,1710 735,1802 696,1858 698`;
    const profits = `601 539 662.1,617 580 -7148.6,661 526 2983.6,673 491 2952.8,681 458 2998.9,745 391 1571.9,753 369 1624.8,761 353 1728.4,769 334 1772.3,773 313 -3458.7,813 346 2633.1,829 353 2795.1,
857 318 -5340.6,909 343 2149.2,921 367 2098.4,941 368 -4465.6,929 392 -4303.0,957 391 1970.5,969 414 2035.1,989 402 2124.8,993 425 2177.4,1001 452 2206.1,1005 478 -4578.0,1025 474 -5146.3,
1045 445 2580.9,1061 415 2549.9,1081 372 -4107.7,1093 381 -4456.4,1089 400 -4379.0,1125 404 2951.5,1145 381 -6822.4,1109 424 -5173.7,1153 419 3316.1,1157 456 3247.5,1165 497 3596.9,1181 544 4026.6,
1217 601 5024.7,1249 647 4011.1,1257 692 3932.8,1285 739 4070.1,1309 788 4282.0,1373 815 2244.1,1377 841 2306.7,1405 870 2307.5,1413 900 2501.4,1421 934 2961.4,1445 934 2913.4,1449 900 2874.9,
1453 870 3004.7,1465 834 2967.8,1493 785 2292.2,1513 743 1622.4,1521 713 1717.9,1525 693 1726.4,1529 675 -3543.3,1541 702 -4093.9,1597 667 1580.6,1609 663 1669.3,1613 638 1891.4,1617 619 2033.8,
1637 625 2424.6,1621 597 -4169.0,1661 656 2701.4,1665 688 2815.1,1685 722 2963.6,1697 759 3209.2,1701 799 3494.1,1729 789 3405.1,1709 843 -7651.0,1733 750 -6756.3,1801 781 -5405.1,1825 752 -4605.4,1857 765 -4`;

    const prices = ["3787.970", "3785.080", "3782.190", "3779.300", "3776.410", "3773.520", "3770.630", "3767.740", "3764.935", "3762.045", "3759.155", "3756.265", "3753.375", "3750.485", "3747.595", "3744.705", "3741.900", "3739.010", "3736.120", "3733.230", "3730.340", "3727.450", "3724.560", "3721.670", "3718.780", "3715.975"];
    const times = ["24 Sep 00:55", "24 Sep 02:15", "24 Sep 03:35", "24 Sep 04:55", "24 Sep 06:15", "24 Sep 07:35", "24 Sep 08:55", "24 Sep 10:15", "24 Sep 11:35", "24 Sep 12:55", "24 Sep 14:15", "24 Sep 15:35", "24 Sep 16:55", "24 Sep 18:15", "24 Sep 19:35", "24 Sep 20:55", "24 Sep 23:17", "25 Sep 00:35", "25 Sep 01:55", "25 Sep 03:15", "25 Sep 04:35"];

    const rows = (s) => s.split(",").map(r => r.trim().split(" "));

    function candle(x, h, t, b, l, cls) {
        const px = x + 0.5;
        out.push(`<path class="${cls}" d="M${px} ${h}V${t}M${px} ${b}V${l}M${px - 1} ${t + 0.5}h2V${Math.max(b, t + 1) + 0.5}h-2z"/>`);
    }
    function levels(data, cls) {
        rows(data).map(r => r.map(Number)).forEach(([a, b, y]) => {
            out.push(`<path class="level ${cls}" d="M${a} ${y}H${b}"/><circle class="${cls}" cx="${a}" cy="${y}" r="2"/>`);
        });
    }
    function arrows(data, cls, flip) {
        rows(data).forEach(([x, y]) => {
            out.push(`<path class="arrow ${cls}" transform="translate(${x} ${y}) scale(1 ${flip})" d="M-1.5 -7H1.5V1.5L4.5 -1.5H6V1L0 7L-6 1V-1.5H-4.5L-1.5 1.5z"/>`);
        });
    }

    out.push(`<defs><clipPath id="area"><path d="M101 102H${right}V${bottom}H101z"/></clipPath></defs>`);
    out.push(`<g transform="translate(${-left} ${-top})">`);
    out.push(`<g clip-path="url(#area)">`);
    rows(profits).forEach(([x, y, t]) => out.push(`<text class="profit" x="${x}" y="${y}">${t}</text>`));
    out.push(`<path class="profit" d="M213 292h41v3h-41z"/>`);
    candle(102, 262, 270, 285, 294, "bear");
    candle(106, 270, 278, 285, 294, "bear");
    candle(110, 275, 279, 285, 294, "bull");
    bars.split(",").forEach((bar, i) => {
        const s = bar.trim();
        const [h, t, b, l] = s.slice(1).split(" ").map(Number);
        candle(601 + i * 4, h, t, b, l, s[0] === "u" ? "bull" : "bear");
    });
    levels(buyLevels, "buy");
    levels(sellLevels, "sell");
    out.push(`<path class="level sell" d="M101 209h11"/>`);
    arrows(upArrows, "buy", -1);
    rows(rings).forEach(([x, y]) => out.push(`<ellipse class="ring" cx="${x}" cy="${y}" rx="3.5" ry="4"/><circle cx="${x}" cy="${y}" r="1" fill="#ff0"/>`));
    arrows(downArrows, "sell", 1);
    out.push(`</g>`);

    // Frame, axes and the current price
    out.push(`<path class="axis" d="M100.5 ${bottom}V101.5H${right + 0.5}V${bottom}M100 ${bottom + 0.5}H${right + 1}M100 ${priceY + 0.5}H${right}"/>`);
    prices.forEach((p, i) => {
        const y = 116 + i * 33;
        out.push(`<path class="axis" d="M${right} ${y + 0.5}h3"/><text class="axis-text" x="1873" y="${y + 4}">${p}</text>`);
    });
    times.forEach((t, i) => {
        const x = 549 + i * 64;
        out.push(`<path class="axis" d="M${x + 0.5} ${bottom}v4"/><text class="axis-text" x="${x - 2}" y="957">${t}</text>`);
    });
    out.push(`<path d="M1869 419h46v11h-46z" fill="#008080"/><text x="1873" y="428">3761.041</text>`);
    out.push(`<path d="M104 108h7l-3.5 4z" fill="#008080"/><text class="axis-text" x="115" y="113">XAUUSDm,M5  3761.280 3761.280 3760.057 3761.041</text>`);
    out.push(`</g>`);
    plot.innerHTML = out.join("");

    // Expert inputs: icon, name, value
    const params = [
        ["string", "_I_", "___ EA INPUTS ___"],
        ["double", "Martingale Lot", "2.0"],
        ["double", "Stop Loss (pips)(0=Disabled)", "20.0"],
        ["double", "Take Profit  (pips)(0=Disabled)", "30.0"],
        ["bool", "Use spread recognition", "true"],
        ["int", "Maximum Number of Trade", "1"],
        ["double", "Lot Size", "0.01"],
        ["double", "TP ( IN $ )", "100.0"],
        ["double", "SL ( IN $ )", "100.0"],
        ["double", "Trail TP ( IN $ )", "250.0"],
        ["double", "Trail Step ( IN $ )", "50.0"],
        ["double", "Break Even ( IN $ )", "100.0"],
        ["string", "Custom Indicator Name", "X"],
        ["int", "Buy Buffer NO", "0"],
        ["int", "Sell Buffer NO", "1"],
        ["int", "Signal Bar NO", "0"],
        ["bool", "Use second ind for close", "false"],
        ["string", "Custom Second Indicator Name", "Y"],
        ["int", "Close Buy Orders Buffer NO", "0"],
        ["int", "Close Sell Orders Buffer NO", "1"],
        ["int", "Signal for Close Orders Bar NO", "0"],
        ["bool", "Use Break Even", "false"],
        ["bool", "Use Trailing Stop", "false"],
        ["bool", "Use Close On Opposite Signal", "false"],
        ["bool", "Use Close Out", "false"],
        ["int", "Close Out Trades Level", "200"],
        ["int", "Close Out Style", "Break_Even"],
        ["int", "Magic Number", "777"]
    ];
    document.getElementById("params").innerHTML = params.map(([type, name, value]) =>
        `<tr><td><svg><use href="#i-${type}"/></svg>${name}</td><td>${value}</td></tr>`).join("");
})();
```
